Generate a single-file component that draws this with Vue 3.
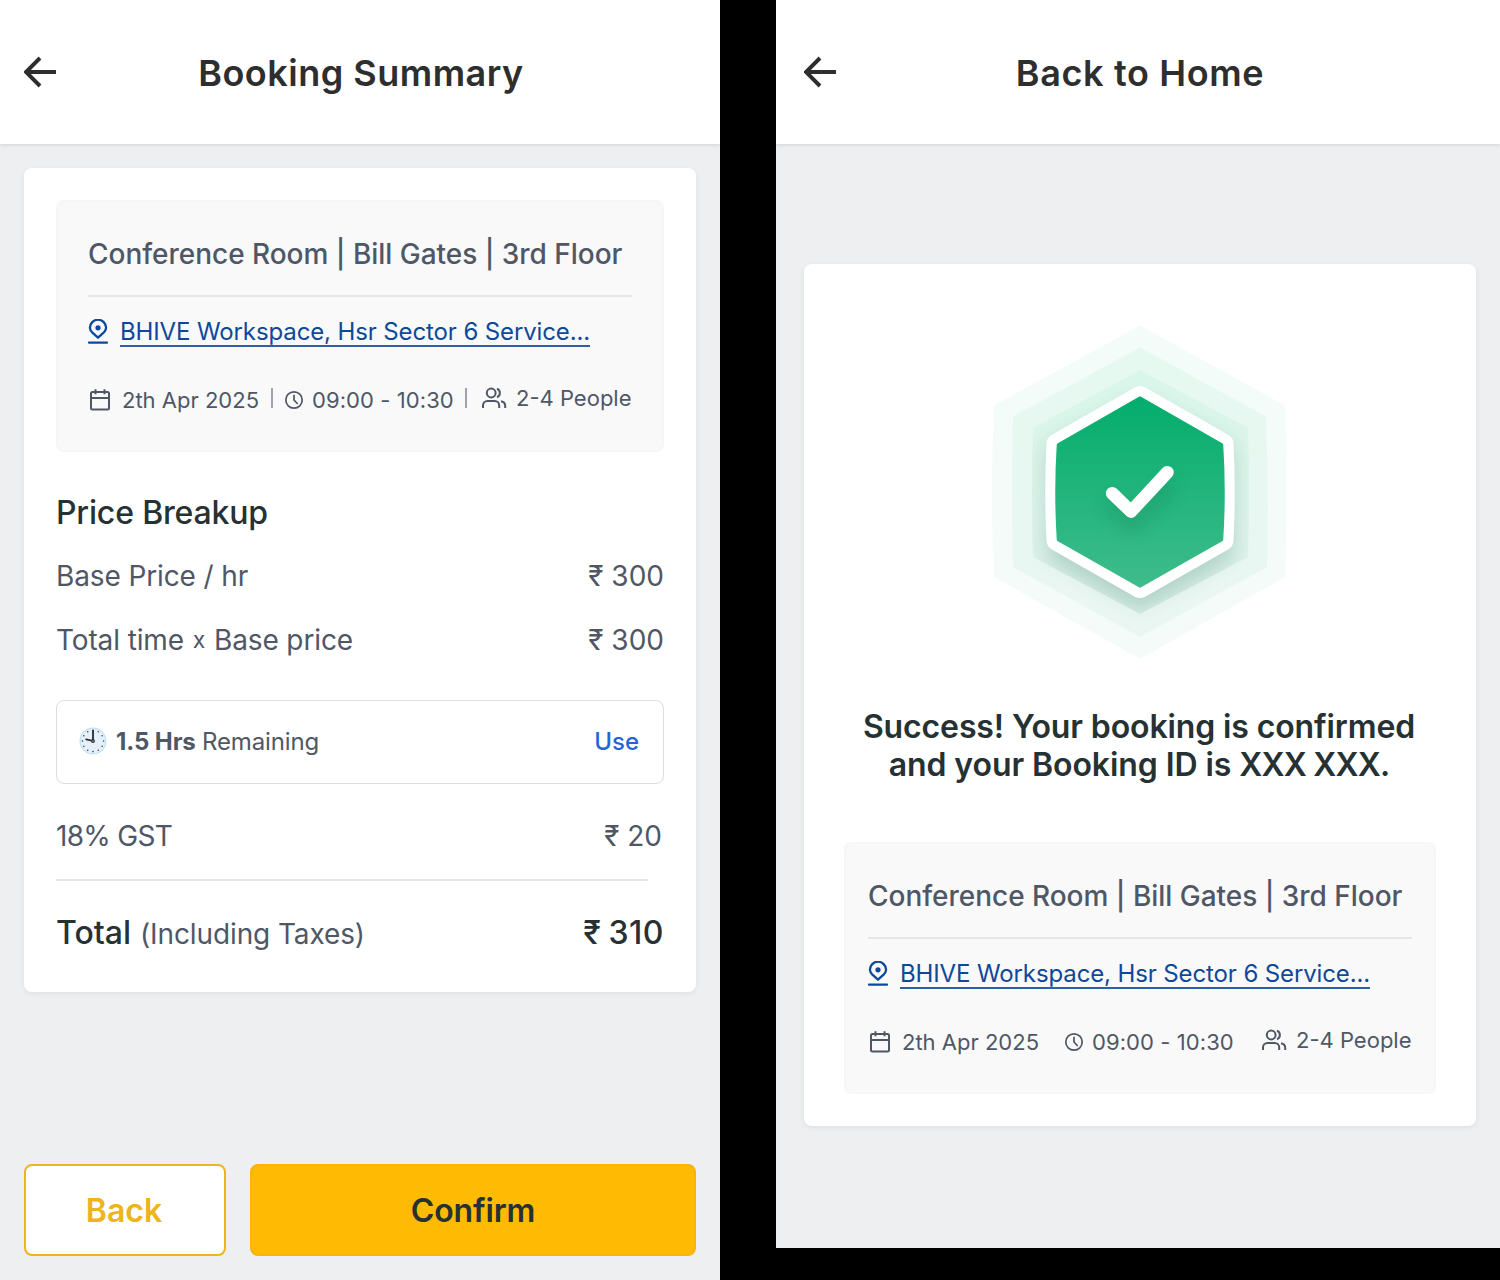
<script setup>
const booking = {
  room: 'Conference Room | Bill Gates | 3rd Floor',
  place: 'BHIVE Workspace, Hsr Sector 6 Service...',
  date: '2th Apr 2025',
  time: '09:00 - 10:30',
  people: '2-4 People',
}

const clockDots = Array.from({ length: 12 }, (_, i) => {
  const a = (i * Math.PI) / 6
  return { x: 14 + Math.sin(a) * 10.6, y: 14 - Math.cos(a) * 10.6 }
})
</script>

<template>
  <svg class="sprite" aria-hidden="true">
    <symbol id="i-arrow" viewBox="0 0 32 32">
      <path d="M32 16H2M16 2 2 16l14 14" fill="none" stroke="currentColor" stroke-width="3.9" />
    </symbol>
    <symbol id="i-pin" viewBox="0 0 20 26">
      <path d="M10 18.700 4.100 13.300A8 8 0 0 1 1.900 8.800a8.100 8.100 0 0 1 16.200 0 8 8 0 0 1-2.200 4.500Z" fill="none" stroke="currentColor" stroke-width="2.300" stroke-linejoin="round" />
      <circle cx="10" cy="8.800" r="2.600" fill="currentColor" />
      <path d="M.9 23.600h18.200" stroke="currentColor" stroke-width="2.200" stroke-linecap="round" />
    </symbol>
    <symbol id="i-calendar" viewBox="0 0 22 24">
      <path d="M3.500 4h15A1.500 1.500 0 0 1 20 5.500v14.500a1.500 1.500 0 0 1-1.500 1.500h-15A1.500 1.500 0 0 1 2 20V5.500A1.500 1.500 0 0 1 3.500 4ZM2 10h18M6.500 1.200v5M15.500 1.200v5" fill="none" stroke="currentColor" stroke-width="2" />
    </symbol>
    <symbol id="i-time" viewBox="0 0 20 20">
      <circle cx="10" cy="10" r="8.200" fill="none" stroke="currentColor" stroke-width="1.700" />
      <path d="M10 4.800V10l3.700 4" fill="none" stroke="currentColor" stroke-width="1.700" />
    </symbol>
    <symbol id="i-people" viewBox="0 0 26 22">
      <path d="M2 21v-2.600A4.500 4.500 0 0 1 6.500 14h7.200a4.500 4.500 0 0 1 4.500 4.400V21M20 14.300c2.700.5 4.200 2.200 4.200 4.600V21M16 1.800a4.500 4.500 0 0 1 0 8.400" fill="none" stroke="currentColor" stroke-width="2" />
      <circle cx="10.200" cy="6" r="4.400" fill="none" stroke="currentColor" stroke-width="2" />
    </symbol>
  </svg>

  <main class="board">
    <section class="phone">
      <header class="bar">
        <svg class="arrow"><use href="#i-arrow" /></svg>
        <h1>Booking Summary</h1>
      </header>

      <div class="card">
        <div class="booking">
          <h2>{{ booking.room }}</h2>
          <div class="place">
            <svg class="pin"><use href="#i-pin" /></svg>
            <a>{{ booking.place }}</a>
          </div>
          <div class="facts">
            <svg class="calendar"><use href="#i-calendar" /></svg>
            <span class="date">{{ booking.date }}</span>
            <i class="sep"></i>
            <svg class="time"><use href="#i-time" /></svg>
            <span class="hours">{{ booking.time }}</span>
            <i class="sep"></i>
            <svg class="people"><use href="#i-people" /></svg>
            <span class="count">{{ booking.people }}</span>
          </div>
        </div>

        <h3>Price Breakup</h3>
        <div class="row"><span class="label">Base Price / hr</span><span>₹ 300</span></div>
        <div class="row">
          <span class="label">Total time<span class="times">x</span>Base price</span><span>₹ 300</span>
        </div>

        <div class="credit">
          <svg class="clock" viewBox="0 0 28 28">
            <circle cx="14" cy="14" r="12.900" fill="#e6f0fb" stroke="#bfe4ef" stroke-width="1.200" />
            <circle v-for="(d, i) in clockDots" :key="i" :cx="d.x" :cy="d.y" r=".8" fill="#39424f" />
            <path d="M14 14V3.600M14 14l-6.800-1.700" stroke="#252b36" stroke-width="1.800" stroke-linecap="round" />
            <circle cx="14" cy="14" r="1.900" fill="#252b36" />
            <circle cx="14" cy="14" r=".7" fill="#c9d4e2" />
          </svg>
          <b>1.5 Hrs</b><span class="left">Remaining</span>
          <span class="use">Use</span>
        </div>

        <div class="row gst"><span class="tax">18% GST</span><span>₹ 20</span></div>
        <div class="rule"></div>
        <div class="total">
          <span><strong>Total</strong><span class="note">(Including Taxes)</span></span>
          <strong class="sum">₹ 310</strong>
        </div>
      </div>

      <footer class="actions">
        <button class="back">Back</button>
        <button class="confirm">Confirm</button>
      </footer>
    </section>

    <section class="phone done">
      <header class="bar">
        <svg class="arrow"><use href="#i-arrow" /></svg>
        <h1>Back to Home</h1>
      </header>

      <div class="card">
        <svg class="badge" viewBox="970 310 340 360">
          <defs>
            <linearGradient id="g-fill" x1="0" y1="0" x2="0" y2="1">
              <stop offset="0" stop-color="#04ad6c" />
              <stop offset="1" stop-color="#3fbc8c" />
            </linearGradient>
            <linearGradient id="g-halo" x1="0" y1="0" x2="0" y2="1">
              <stop offset="0" stop-color="#10c878" />
              <stop offset="1" stop-color="#3aa888" />
            </linearGradient>
            <filter id="f-shadow" x="-40%" y="-40%" width="180%" height="180%">
              <feGaussianBlur stdDeviation="11" />
            </filter>
            <filter id="f-tick" x="-80%" y="-80%" width="260%" height="280%">
              <feGaussianBlur stdDeviation="8" />
            </filter>
            <clipPath id="c-halo">
              <path d="M1140 370 1248 428Q1250 492 1248 557L1140 614 1033 557Q1031 492 1033 428Z" />
            </clipPath>
          </defs>
          <g fill="url(#g-halo)">
            <path opacity=".05" d="M1140 325.500 1285 405.500Q1289 492 1285 577L1140 659 994 577Q990 492 994 405.500Z" />
            <path opacity=".06" d="M1140 347.500 1266 416.500Q1269 492 1267 567L1140 637 1013 567Q1011 492 1013 416.500Z" />
            <path opacity=".06" d="M1140 370 1248 428Q1250 492 1248 557L1140 614 1033 557Q1031 492 1033 428Z" />
          </g>
          <path d="M1140 402 1228 449V556L1140 606 1052 556V449Z" fill="#1c6b50" opacity=".13" filter="url(#f-shadow)" />
          <g clip-path="url(#c-halo)">
            <path d="M1140 400 1234 449V562L1140 616 1046 562V449Z" fill="#1c6b50" opacity=".13" filter="url(#f-shadow)" />
          </g>
          <path d="M1140 396.500 1223 443.800Q1225.500 492 1223 540.300L1140 587.500 1057 540.300Q1054.500 492 1057 443.800Z" fill="#fff" stroke="#fff" stroke-width="21" stroke-linejoin="round" />
          <path d="M1140 397.500 1222 444.500Q1225 492 1222 539.800L1140 586.500 1058 539.800Q1055 492 1058 444.500Z" fill="url(#g-fill)" stroke="url(#g-fill)" stroke-width="2.500" stroke-linejoin="round" />
          <path d="M1112.300 505 1131 526 1167.300 488" fill="none" stroke="#0b6a45" stroke-width="16" opacity=".2" stroke-linecap="round" stroke-linejoin="round" filter="url(#f-tick)" />
          <path d="M1112.300 493.300 1131 511.500 1167.300 472.300" fill="none" stroke="#fff" stroke-width="12.800" stroke-linecap="round" stroke-linejoin="round" />
        </svg>

        <p class="message">
          <span class="first">Success! Your booking is confirmed</span>
          <span class="second">and your Booking ID is <span class="code">XXX XXX.</span></span>
        </p>

        <div class="booking">
          <h2>{{ booking.room }}</h2>
          <div class="place">
            <svg class="pin"><use href="#i-pin" /></svg>
            <a>{{ booking.place }}</a>
          </div>
          <div class="facts">
            <svg class="calendar"><use href="#i-calendar" /></svg>
            <span class="date">{{ booking.date }}</span>
            <i class="sep blank"></i>
            <svg class="time"><use href="#i-time" /></svg>
            <span class="hours">{{ booking.time }}</span>
            <i class="sep blank"></i>
            <svg class="people"><use href="#i-people" /></svg>
            <span class="count">{{ booking.people }}</span>
          </div>
        </div>
      </div>
    </section>
  </main>
</template>

<style>
body {
  background: #000;
  overflow: hidden;
}
</style>

<style scoped>
* {
  box-sizing: border-box;
  margin: 0;
}
.sprite {
  position: absolute;
  width: 0;
  height: 0;
}
svg {
  display: block;
  flex: none;
}
.board {
  display: flex;
  align-items: flex-start;
  gap: 56px;
  width: 1500px;
  height: 1280px;
  background: #000;
  font-family: Inter, sans-serif;
  color: #4f5766;
  white-space: nowrap;
  overflow: hidden;
}
.phone {
  display: flex;
  flex-direction: column;
  width: 720px;
  height: 1280px;
  background: #edeff0;
  flex: none;
}
.done {
  width: 724px;
  height: 1248px;
}
.bar {
  display: flex;
  align-items: center;
  height: 144px;
  padding: 0 24px;
  background: #fff;
  box-shadow: 0 1px 4px rgba(0, 0, 0, 0.12);
}
.done .bar {
  padding-left: 28px;
}
.arrow {
  width: 32px;
  height: 32px;
  color: #2e2e2e;
}
.bar h1 {
  flex: 1;
  margin-right: 30px;
  padding-top: 2px;
  font-size: 36px;
  line-height: 44px;
  font-weight: 600;
  letter-spacing: 0.5px;
  text-align: center;
  color: #2e2e2e;
}
.done .bar h1 {
  margin-right: 32px;
  letter-spacing: 0.63px;
}
.card {
  display: flex;
  flex-direction: column;
  width: 672px;
  height: 824px;
  margin: 24px 24px 0;
  padding: 32px;
  background: #fff;
  border-radius: 8px;
  box-shadow: 0 2px 6px rgba(0, 0, 0, 0.06);
}
.done .card {
  height: 862px;
  margin: 120px 24px 0 28px;
  padding: 46px 40px 32px;
}
.booking {
  height: 252px;
  padding: 30px;
  background: #f9f9f9;
  border: 2px solid #f5f6f6;
  border-radius: 8px;
  flex: none;
}
.done .booking {
  margin-top: auto;
  padding: 30px 22px;
}
.booking h2 {
  height: 65px;
  border-bottom: 2px solid #e5e6e7;
  font-size: 28px;
  line-height: 44px;
  font-weight: 500;
  letter-spacing: -0.025px;
}
.place {
  display: flex;
  align-items: flex-start;
  gap: 12px;
  height: 60px;
  padding-top: 21px;
  color: #0e489b;
}
.pin {
  width: 20px;
  height: 26px;
  margin-top: 1px;
}
.place a {
  height: 29px;
  border-bottom: 2px solid #2d60a9;
  font-size: 24px;
  line-height: 27px;
  letter-spacing: -0.12px;
}
.facts {
  display: flex;
  align-items: center;
  height: 86px;
  font-size: 22px;
  line-height: 28px;
}
.calendar {
  width: 22px;
  height: 24px;
  margin: 0 11px 0 1px;
}
.date {
  width: 149px;
}
.sep {
  width: 2px;
  height: 20px;
  margin: -2px 11px 2px 0;
  background: #a0a4aa;
}
.blank {
  background: none;
}
.time {
  width: 20px;
  height: 20px;
  margin-right: 8px;
}
.hours {
  width: 153px;
  letter-spacing: 0.08px;
}
.people {
  width: 26px;
  height: 22px;
  margin: -4px 9px 0 3px;
}
.count {
  margin-top: -4px;
}
h3 {
  height: 40px;
  margin-top: 41px;
  font-size: 32px;
  line-height: 40px;
  font-weight: 500;
  letter-spacing: -0.17px;
  color: #263133;
}
.row {
  display: flex;
  justify-content: space-between;
  height: 40px;
  margin-top: 23px;
  font-size: 28px;
  line-height: 40px;
}
.row + .row {
  margin-top: 24px;
}
.label {
  letter-spacing: -0.12px;
}
.times {
  display: inline-block;
  width: 30px;
  position: relative;
  top: -2px;
  font-size: 23px;
  line-height: 30px;
  text-align: center;
}
.credit {
  display: flex;
  align-items: center;
  height: 84px;
  margin-top: 40px;
  padding: 0 24px 2px 22px;
  border: 1px solid #dcdedf;
  border-radius: 8px;
  font-size: 24px;
  flex: none;
}
.clock {
  width: 28px;
  height: 28px;
  margin-right: 9px;
}
.credit b {
  width: 86px;
  font-weight: 700;
  letter-spacing: -0.1px;
}
.left {
  letter-spacing: -0.13px;
}
.use {
  margin-left: auto;
  font-weight: 500;
  color: #2563dc;
}
.row.gst {
  margin-top: 32px;
  padding-right: 2px;
}
.tax {
  letter-spacing: -0.7px;
}
.rule {
  width: 592px;
  height: 2px;
  margin-top: 23px;
  background: #e4e5e6;
}
.total {
  display: flex;
  justify-content: space-between;
  height: 44px;
  margin-top: 30px;
  font-size: 32px;
  line-height: 44px;
}
.total strong {
  font-weight: 500;
  color: #263133;
}
.note {
  margin-left: 9px;
  font-size: 28px;
  letter-spacing: -0.11px;
}
.total .sum {
  letter-spacing: 0.5px;
  word-spacing: -2px;
}
.actions {
  display: flex;
  gap: 24px;
  margin: auto 24px 24px;
}
.actions button {
  height: 92px;
  padding: 2px 0 0;
  border-radius: 8px;
  font-family: inherit;
  font-size: 32px;
  line-height: 44px;
  font-weight: 600;
}
.actions .back {
  width: 202px;
  padding-right: 2px;
  border: 2px solid #edb41c;
  background: #fff;
  color: #edb41c;
}
.actions .confirm {
  flex: 1;
  border: 2px solid #f7b50c;
  background: #ffba04;
  color: #263133;
  letter-spacing: -0.15px;
}
.badge {
  width: 340px;
  height: 360px;
  margin: 0 auto;
}
.message {
  display: flex;
  flex-direction: column;
  align-items: center;
  margin-top: 38px;
  padding-right: 2px;
  font-size: 32px;
  line-height: 38px;
  font-weight: 600;
  color: #263133;
}
.first {
  letter-spacing: -0.12px;
}
.second {
  letter-spacing: -0.08px;
}
.code {
  letter-spacing: -0.8px;
}
</style>
